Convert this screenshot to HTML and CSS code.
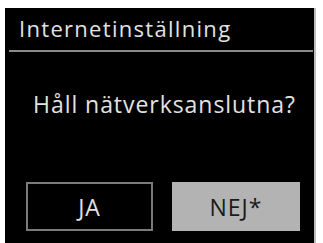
FILE: index.html
```html
<!DOCTYPE html>
<html>
<head>
<meta charset="utf-8">
<link rel="stylesheet" href="styles.css">
</head>
<body>
<div class="screen">
  <div class="title">Internetinställning</div>
  <div class="rule"></div>
  <div class="question">Håll nätverksanslutna?</div>
  <div class="buttons">
    <div class="btn btn-ja">JA</div>
    <div class="btn btn-nej">NEJ*</div>
  </div>
</div>
</body>
</html>
```
FILE: styles.css
```css
html, body {
  margin: 0;
  padding: 0;
  background: #ffffff;
}
body {
  padding: 8px 0 0 5px;
  width: 323px;
  height: 243px;
  box-sizing: border-box;
  overflow: hidden;
}
.screen {
  width: 309px;
  height: 235px;
  background: #000;
  border-right: 2px solid #bdbdbd;
  font-family: "Open Sans", sans-serif;
  color: #e2e2e2;
  display: flex;
  flex-direction: column;
}
.title {
  font-size: 22px;
  line-height: 28px;
  letter-spacing: 1.3px;
  padding: 6px 0 0 14px;
  white-space: nowrap;
}
.rule {
  height: 2px;
  background: #8a8a8a;
  margin: 8px 1px 0 4px;
}
.question {
  font-size: 23px;
  line-height: 30px;
  letter-spacing: 0.95px;
  padding: 37px 0 0 28px;
  white-space: nowrap;
}
.buttons {
  display: flex;
  gap: 19px;
  padding: 63px 0 0 21px;
}
.btn {
  width: 127px;
  height: 49px;
  box-sizing: border-box;
  display: flex;
  align-items: center;
  justify-content: center;
  font-size: 23px;
  letter-spacing: 1px;
}
.btn-ja {
  border: 2px solid #7a7a7a;
  color: #e2e2e2;
}
.btn-nej {
  width: 128px;
  background: #b3b3b3;
  color: #1a1a1a;
}
```
